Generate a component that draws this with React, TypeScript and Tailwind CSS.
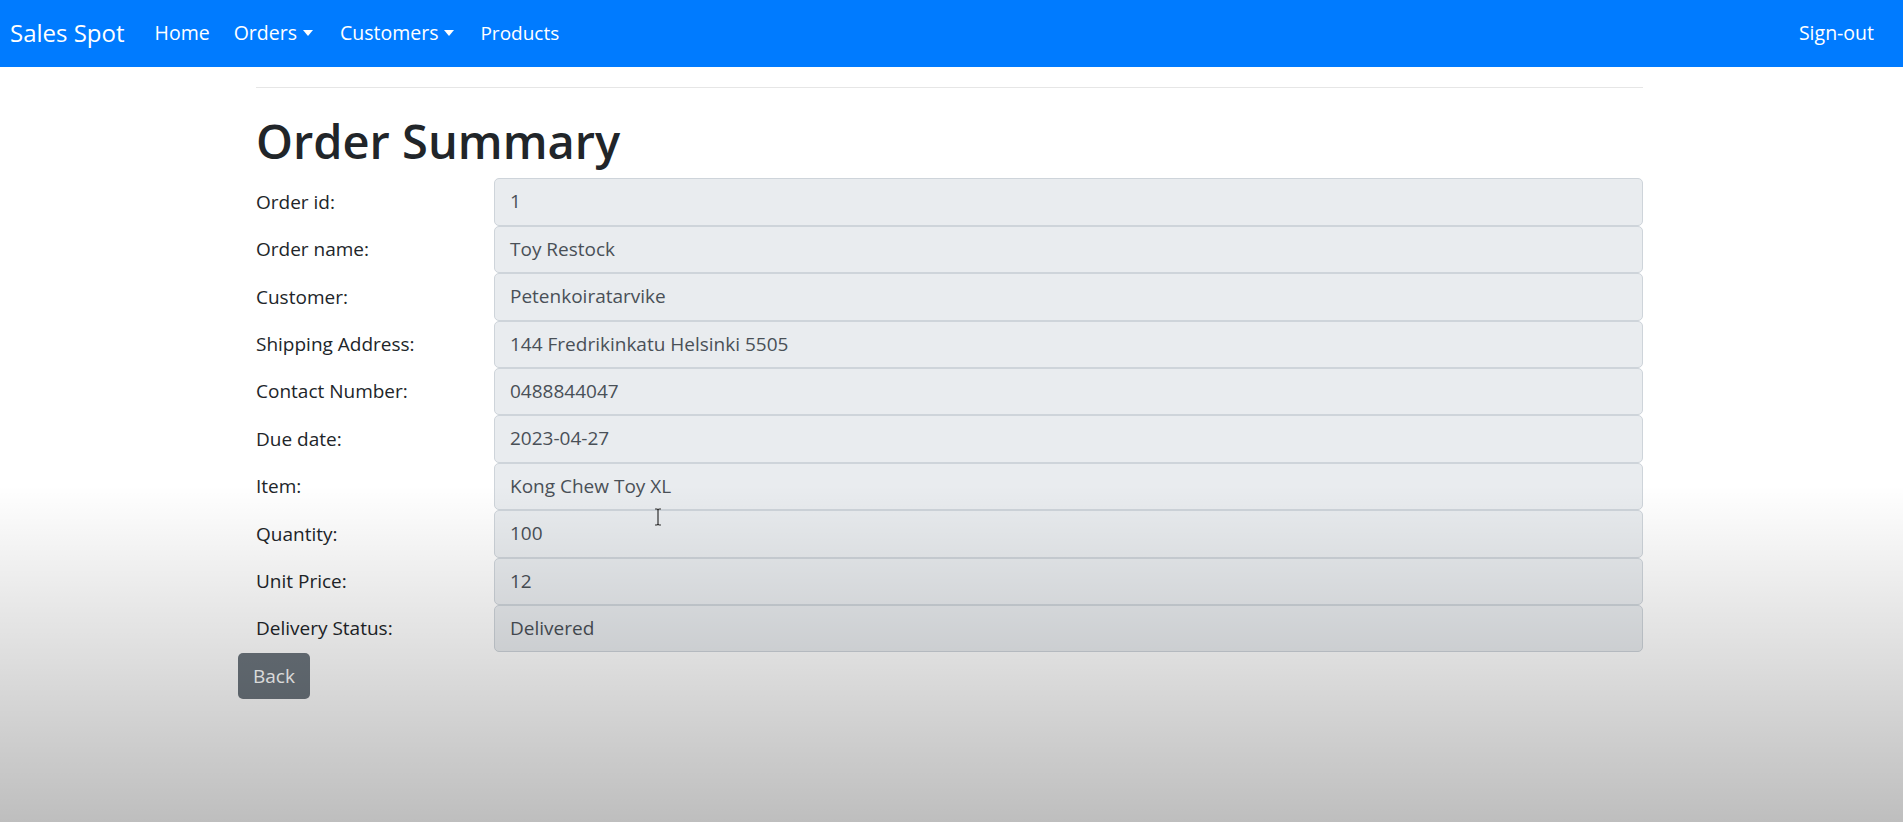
const fields: [string, string][] = [
  ['Order id:', '1'],
  ['Order name:', 'Toy Restock'],
  ['Customer:', 'Petenkoiratarvike'],
  ['Shipping Address:', '144 Fredrikinkatu Helsinki 5505'],
  ['Contact Number:', '0488844047'],
  ['Due date:', '2023-04-27'],
  ['Item:', 'Kong Chew Toy XL'],
  ['Quantity:', '100'],
  ['Unit Price:', '12'],
  ['Delivery Status:', 'Delivered'],
]

function Caret() {
  return (
    <span className="ml-[6px] mr-[3px] inline-block h-0 w-0 border-x-[5px] border-t-[6px] border-x-transparent border-t-white align-[4px]" />
  )
}

function Navbar() {
  return (
    <nav className="flex h-[67px] items-center bg-[#007bff] pl-[10px] pr-[29px] text-white">
      <a className="mr-[18px] pb-[1px] text-[24px] leading-none">Sales Spot</a>
      <ul className="flex items-center pb-[1px] text-[19.5px]">
        <li className="px-[12px]">Home</li>
        <li className="px-[12px]">Orders<Caret /></li>
        <li className="px-[12px]">Customers<Caret /></li>
        <li className="pl-[11px] pr-[12px] text-[19px]">Products</li>
      </ul>
      <a className="ml-auto pb-[1px] text-[19.5px]">Sign-out</a>
    </nav>
  )
}

export default function App() {
  return (
    <div className="relative min-h-[822px] overflow-hidden bg-white font-['Open_Sans',sans-serif]">
      <Navbar />

      <main className="mx-auto w-[1387px] -translate-x-[2px]">
        <hr className="mt-[20px] border-t border-[#e6e6e6]" />
        <h1 className="mt-[25px] mb-[9px] text-[47px] font-semibold leading-[1.2] text-[#212529]">Order Summary</h1>

        <div className="flex flex-col">
          {fields.map(([label, value]) => (
            <div key={label} className="grid grid-cols-[238px_1fr] items-center">
              <label className="text-[19px] text-[#212529]">{label}</label>
              <div className="h-[47.4px] rounded-[5px] border border-[#ced4da] bg-[#e9ecef] px-[15px] text-[19px] leading-[45px] text-[#495057]">
                {value}
              </div>
            </div>
          ))}
        </div>

        <button className="mt-px -ml-[18px] h-[46px] rounded-[5px] bg-[#6c757d] px-[15px] text-[19px] text-white">
          Back
        </button>
      </main>

      {/* text cursor */}
      <svg className="absolute left-[653px] top-[508px]" width="10" height="18" viewBox="0 0 10 18">
        <path d="M2 1h2l1 1 1-1h2M5 2v14M2 17h2l1-1 1 1h2" fill="none" stroke="#333" strokeWidth="1.2" />
      </svg>

      {/* darkening toward the bottom of the frame */}
      <div className="pointer-events-none absolute inset-0 bg-[linear-gradient(to_bottom,rgba(0,0,0,0)_0%,rgba(0,0,0,0)_59%,rgba(0,0,0,0.255)_100%)]" />
    </div>
  )
}
